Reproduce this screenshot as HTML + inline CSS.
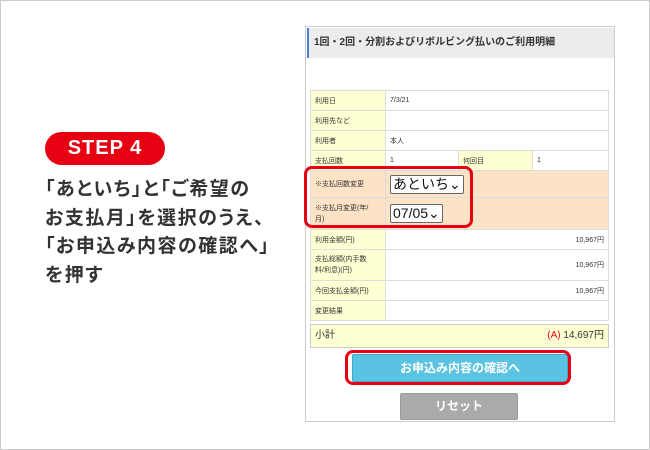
<!DOCTYPE html>
<html><head><meta charset="utf-8"><style>
*{box-sizing:border-box;margin:0;padding:0}
body{width:650px;height:450px;background:#fff;font-family:"Liberation Sans","Noto Sans CJK JP",sans-serif;position:relative;overflow:hidden}
.frame{position:absolute;left:0;top:0;width:650px;height:450px;border:1px solid #ccc}
.pill{position:absolute;left:45px;top:132px;width:120px;height:33px;background:#e60012;border-radius:17px;color:#fff;font-weight:bold;font-size:20px;line-height:33px;text-align:center;letter-spacing:1px}
.msg{position:absolute;left:45px;top:176px;font-size:19px;line-height:28.5px;color:#333;font-weight:bold;white-space:nowrap;font-feature-settings:"palt";letter-spacing:1.5px}
.shot{position:absolute;left:305px;top:26px;width:310px;height:396px;border:1px solid #ccc;background:#fff}
.hd{position:absolute;left:1px;top:1px;width:307px;height:30px;background:#ececec;border-left:2px solid #4a7fd0;font-size:10px;font-weight:bold;color:#333;line-height:30px;padding-left:5px}
table{position:absolute;left:4px;top:63px;width:299px;border-collapse:collapse;font-size:7px;color:#333}
td{border:1px solid #ddd;padding:0 4px;height:20px}
td.l{background:#ffffd4;width:75px}
tr.o td{background:#fde3c6}
tr.o td.l{background:#fde3c6}
.sel{display:inline-block;border:1px solid #666;border-radius:2px;background:#fff;color:#111;font-size:14px;padding:0 2px;line-height:17px}
.r{text-align:right}
.sub{position:absolute;left:4px;top:297px;width:299px;height:24px;background:#ffffd4;border:1px solid #ccc;font-size:10px;color:#333;line-height:22px;padding:0 4px}
.sub span{float:right}
.rb{position:absolute;border:3px solid #e60012;border-radius:8px}
.btn{position:absolute;left:46px;top:327px;width:216px;height:28px;background:#5bc3e2;border:1px solid #3fa9cb;border-radius:2px;color:#fff;font-size:12px;font-weight:bold;text-align:center;line-height:26px}
.rst{position:absolute;left:94px;top:366px;width:118px;height:27px;background:#aaa;border:1px solid #999;border-radius:2px;color:#fff;font-size:12px;font-weight:bold;text-align:center;line-height:25px}
</style></head><body>
<div class="frame"></div>
<div class="pill">STEP 4</div>
<div class="msg">「あといち」と「ご希望の<br>お支払月」を選択のうえ、<br>「お申込み内容の確認へ」<br>を押す</div>
<div class="shot">
<div class="hd">1回・2回・分割およびリボルビング払いのご利用明細</div>
<table>
<tr><td class="l">利用日</td><td colspan="3">7/3/21</td></tr>
<tr><td class="l">利用先など</td><td colspan="3"></td></tr>
<tr><td class="l">利用者</td><td colspan="3">本人</td></tr>
<tr><td class="l">支払回数</td><td style="width:73px">1</td><td class="l" style="width:74px">何回目</td><td>1</td></tr>
<tr class="o"><td class="l" style="height:27px">※支払回数変更</td><td colspan="3"><span class="sel">あといち⌄</span></td></tr>
<tr class="o"><td class="l" style="height:32px;line-height:11px">※支払月変更(年/<br>月)</td><td colspan="3"><span class="sel">07/05⌄</span></td></tr>
<tr><td class="l" style="height:19px">利用金額(円)</td><td colspan="3" class="r">10,967円</td></tr>
<tr><td class="l" style="height:31px;line-height:11px">支払総額(内手数<br>料/利息)(円)</td><td colspan="3" class="r">10,967円</td></tr>
<tr><td class="l">今回支払金額(円)</td><td colspan="3" class="r">10,967円</td></tr>
<tr><td class="l">変更結果</td><td colspan="3"></td></tr>
</table>
<div class="sub">小計<span><b style="color:#e60012;font-weight:normal">(A)</b> 14,697円</span></div>
<div class="btn">お申込み内容の確認へ</div>
<div class="rst">リセット</div>
</div>
<div class="rb" style="left:304px;top:166px;width:169px;height:62px"></div>
<div class="rb" style="left:345px;top:350px;width:226px;height:35px"></div>
</body></html>
